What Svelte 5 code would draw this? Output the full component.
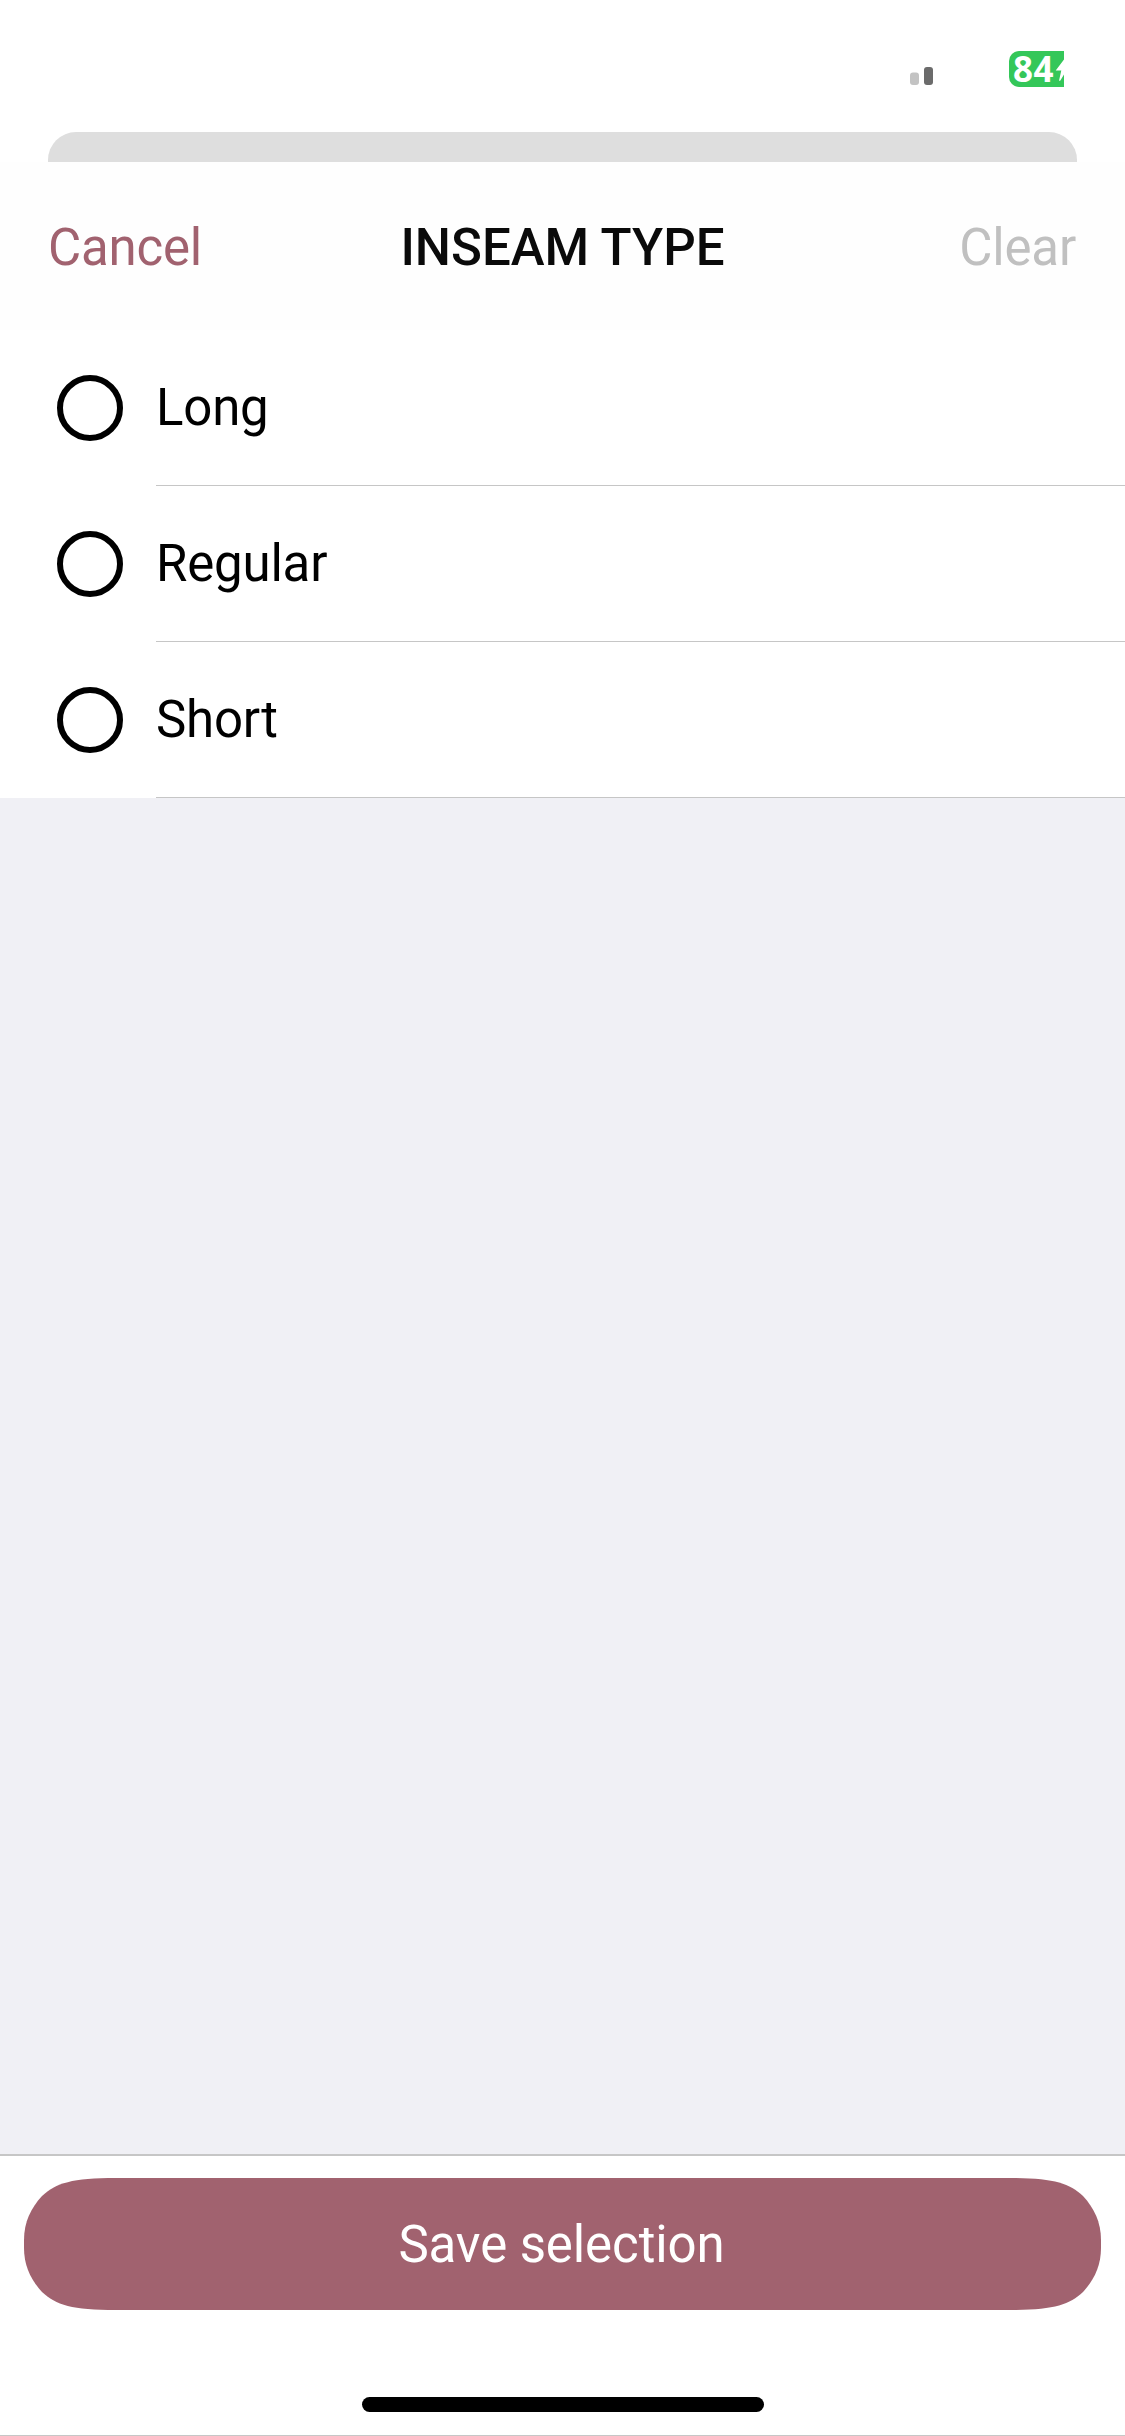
<script lang="ts">
  const options = ['Long', 'Regular', 'Short'];

  let selected = $state<string | null>(null);
</script>

<div class="screen">
  <div class="status-bar">
    <svg class="signal" width="23" height="18" viewBox="0 0 23 18" aria-hidden="true">
      <rect x="0" y="5.5" width="9" height="12.5" rx="3" fill="#c3c3c3" />
      <rect x="14" y="0" width="9" height="18" rx="3" fill="#6b6b6b" />
    </svg>
    <div class="battery">
      <span class="level">84</span>
      <svg class="bolt" width="9" height="24" viewBox="0 0 9 24" aria-hidden="true">
        <path d="M9 2.5 L0.7 13.5 H6.3 L4 23.8 H5.2 L9 17.5 Z" fill="#fff" />
      </svg>
    </div>
  </div>

  <!-- Edge of the view stacked behind the sheet -->
  <div class="behind"></div>

  <header class="header">
    <button class="cancel">Cancel</button>
    <h1>INSEAM TYPE</h1>
    <button class="clear" disabled={!selected} onclick={() => (selected = null)}>Clear</button>
  </header>

  <div class="options" role="radiogroup" aria-label="Inseam type">
    {#each options as option}
      <button
        class="option"
        role="radio"
        aria-checked={selected === option}
        onclick={() => (selected = option)}
      >
        <span class="radio" class:checked={selected === option}></span>
        <span class="option-label">{option}</span>
      </button>
    {/each}
  </div>

  <div class="spacer"></div>

  <footer class="footer">
    <button class="save">Save selection</button>
    <div class="home-indicator"></div>
  </footer>
</div>

<style>
  :global(body) {
    background: #fff;
  }

  .screen {
    display: flex;
    flex-direction: column;
    width: 1125px;
    height: 2436px;
    background: #f0f0f5;
    font-family: Roboto, 'Liberation Sans', sans-serif;
    font-size: 51px;
    color: #000;
    overflow: hidden;
  }

  button {
    margin: 0;
    padding: 0;
    border: none;
    background: none;
    font: inherit;
    letter-spacing: -0.2px;
    color: inherit;
  }

  .status-bar {
    display: flex;
    justify-content: flex-end;
    align-items: flex-start;
    gap: 76px;
    box-sizing: border-box;
    height: 132px;
    padding: 51px 61px 0 0;
    background: #fff;
  }

  .signal {
    margin-top: 16px;
  }

  .battery {
    display: flex;
    align-items: center;
    box-sizing: border-box;
    width: 55px;
    height: 36px;
    padding-left: 4px;
    border-radius: 10px 0 0 10px;
    background: #34c759;
  }

  .level {
    width: 42px;
    flex-shrink: 0;
    font-family: 'Noto Sans', sans-serif;
    font-size: 35px;
    font-weight: 700;
    letter-spacing: 0.5px;
    line-height: 36px;
    color: #fff;
  }

  .bolt {
    flex-shrink: 0;
  }

  .behind {
    height: 30px;
    padding: 0 48px;
    background: #fff;
  }

  .behind::before {
    content: '';
    display: block;
    height: 30px;
    border-radius: 28px 28px 0 0;
    background: #dedede;
  }

  .header {
    display: grid;
    grid-template-columns: 1fr auto 1fr;
    align-items: center;
    box-sizing: border-box;
    height: 168px;
    padding: 2px 48px 0;
    background: #fefefe;
  }

  h1 {
    margin: 0;
    font-size: 51px;
    font-weight: 500;
    color: #0a0a0a;
  }

  .cancel {
    justify-self: start;
    color: #a1626f;
  }

  .clear {
    justify-self: end;
    padding-right: 1px;
    color: #c0c0c0;
  }

  .options {
    background: #fff;
  }

  .option {
    display: flex;
    align-items: stretch;
    width: 100%;
    height: 156px;
    padding-left: 57px;
    text-align: left;
  }

  .radio {
    box-sizing: border-box;
    width: 66px;
    height: 66px;
    margin: 45px 33px 0 0;
    border: 6px solid #000;
    border-radius: 50%;
  }

  .radio.checked {
    background: radial-gradient(#000 45%, transparent 47%);
  }

  .option-label {
    flex: 1;
    border-bottom: 1px solid #c6c6c6;
    line-height: 156px;
  }

  .spacer {
    flex: 1;
  }

  .footer {
    display: flex;
    flex-direction: column;
    align-items: center;
    box-sizing: border-box;
    height: 282px;
    padding-top: 22px;
    border-top: 2px solid #c6c6c6;
    border-bottom: 1px solid #c6c6c6;
    background: #fff;
  }

  .save {
    box-sizing: border-box;
    width: 1077px;
    height: 132px;
    padding-right: 2px;
    background: #a1626f;
    letter-spacing: -0.1px;
    color: #fff;
    /* Continuous corners, flatter along the top and bottom edges */
    clip-path: path('M0 62 C0 44 7 30 18 18 C32 5 48 0 92 0 H985 C1029 0 1045 5 1059 18 C1070 30 1077 44 1077 62 V70 C1077 88 1070 102 1059 114 C1045 127 1029 132 985 132 H92 C48 132 32 127 18 114 C7 102 0 88 0 70 Z');
  }

  .home-indicator {
    width: 402px;
    height: 15px;
    margin-top: 87px;
    border-radius: 8px;
    background: #000;
  }
</style>
